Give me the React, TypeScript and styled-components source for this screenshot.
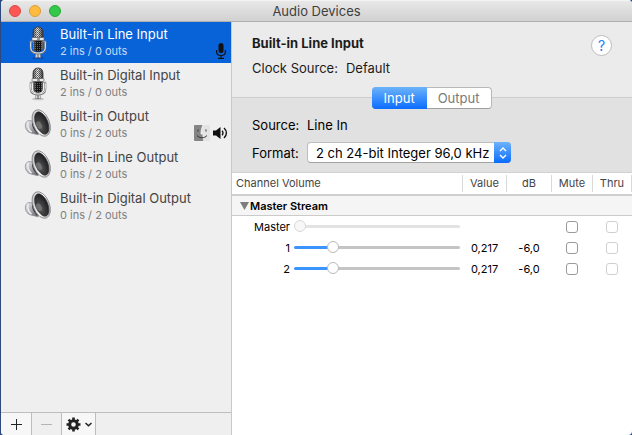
import React, { useState } from "react";
import styled, { createGlobalStyle, css } from "styled-components";

const GlobalStyle = createGlobalStyle`
  *, *::before, *::after { box-sizing: border-box; }
  body {
    margin: 0;
    background: #2c4a80;
    font-family: Inter, "Liberation Sans", sans-serif;
    font-size: 13px;
    line-height: 16px;
    color: #1c1c1c;
  }
  button, input, select { font: inherit; color: inherit; margin: 0; }
`;

const Window = styled.div`
  display: flex;
  flex-direction: column;
  min-height: 100vh;
  margin-left: 1px;
  background: #fff;
  border-radius: 4px;
  overflow: hidden;
`;

const TitleBar = styled.header`
  display: grid;
  grid-template-columns: 64px 1fr 64px;
  align-items: center;
  height: 22px;
  background: linear-gradient(#e8e8e8, #d1d1d1);
  border-top: 1px solid #f4f4f4;
  border-bottom: 1px solid #b0b0b0;
`;

const Lights = styled.div`
  display: flex;
  gap: 8px;
  padding-left: 8px;
`;

const Light = styled.button<{ $fill: string; $edge: string }>`
  width: 12px;
  height: 12px;
  padding: 0;
  border-radius: 50%;
  border: 1px solid ${(p) => p.$edge};
  background: ${(p) => p.$fill};
`;

const Title = styled.h1`
  margin: 0;
  font-size: 13px;
  font-weight: 400;
  text-align: center;
  color: #404040;
`;

const Body = styled.div`
  display: flex;
  flex: 1;
`;

const Sidebar = styled.aside`
  display: flex;
  flex-direction: column;
  flex: 0 0 231px;
  background: #efefef;
  border-right: 1px solid #c9c9c9;
`;

const DeviceList = styled.ul`
  flex: 1;
  margin: 0;
  padding: 0;
  list-style: none;
`;

const DeviceRow = styled.button<{ $selected: boolean }>`
  display: flex;
  align-items: center;
  width: 100%;
  height: 41px;
  padding: 0 3px 0 23px;
  border: 0;
  text-align: left;
  background: ${(p) => (p.$selected ? "#0863d9" : "transparent")};
  color: ${(p) => (p.$selected ? "#fff" : "#444")};
`;

const IconSlot = styled.span`
  display: flex;
  justify-content: center;
  align-self: flex-start;
  width: 28px;
  margin-right: 8px;
  padding-top: 4px;
`;

const DeviceText = styled.span`
  display: flex;
  flex-direction: column;
  gap: 1px;
  flex: 1;
  white-space: nowrap;
`;

const DeviceIo = styled.span<{ $selected: boolean }>`
  font-size: 11px;
  color: ${(p) => (p.$selected ? "#c6dbf6" : "#808080")};
`;

const Badges = styled.span`
  display: flex;
  align-items: center;
  align-self: flex-end;
  gap: 3px;
  margin-bottom: 4px;
`;

const Footer = styled.div`
  display: flex;
  height: 23px;
  border-top: 1px solid #bdbdbd;
`;

const FooterButton = styled.button<{ $wide?: boolean }>`
  display: flex;
  align-items: center;
  justify-content: center;
  gap: 4px;
  width: ${(p) => (p.$wide ? 34 : 30)}px;
  padding: 0;
  border: 0;
  border-right: 1px solid #bdbdbd;
  background: #f7f7f7;
  &:first-child { width: 31px; }
  &:disabled { background: #efefef; }
`;

const Detail = styled.main`
  flex: 1;
  min-width: 0;
`;

const Summary = styled.section`
  display: flex;
  justify-content: space-between;
  align-items: flex-start;
  height: 75px;
  padding: 13px 20px 0;
  background: #ebebeb;
`;

const DeviceName = styled.h2`
  margin: 0 0 9px;
  font-size: 13px;
  line-height: 16px;
  font-weight: 700;
`;

const Facts = styled.div`
  display: flex;
  gap: 8px;
`;

const HelpButton = styled.button`
  width: 21px;
  height: 21px;
  padding: 0;
  border: 1px solid #bcbcbc;
  border-radius: 50%;
  background: #fff;
  color: #1a7dff;
  font-size: 14px;
  line-height: 18px;
`;

const Settings = styled.section`
  height: 76px;
  padding: 0 20px;
  background: #e1e1e1;
  border-top: 1px solid #cdcdcd;
  border-bottom: 1px solid #d2d2d2;
`;

const Tabs = styled.div`
  display: flex;
  width: max-content;
  margin: -11px auto 8px;
  border: 1px solid #b8b8b8;
  border-bottom-color: #9f9f9f;
  border-radius: 4px;
  background: #fff;
`;

const Tab = styled.button<{ $active: boolean }>`
  height: 20px;
  padding: 0 12px 0 11px;
  border: 0;
  background: transparent;
  color: #7a7a7a;
  ${(p) =>
    p.$active &&
    css`
      margin: -1px 0 -1px -1px;
      height: 22px;
      padding: 0 12px;
      border-radius: 4px 0 0 4px;
      background: linear-gradient(#6cb3fa, #0a6cff);
      color: #fff;
    `}
`;

const FormGrid = styled.div`
  display: grid;
  grid-template-columns: 48px 204px;
  column-gap: 7px;
  row-gap: 9px;
  align-items: center;
  color: #000;
`;

const SelectBox = styled.span`
  position: relative;
  display: block;
`;

const Select = styled.select`
  appearance: none;
  display: block;
  width: 100%;
  height: 21px;
  padding: 0 18px 0 8px;
  border: 1px solid #bdbdbd;
  border-bottom-color: #a3a3a3;
  border-radius: 4px;
  background: #fff;
`;

const SelectArrows = styled.span`
  position: absolute;
  top: 0;
  right: 0;
  display: flex;
  width: 17px;
  height: 21px;
  align-items: center;
  justify-content: center;
  border-radius: 0 4px 4px 0;
  background: linear-gradient(#6cb3fa, #0a6cff);
  pointer-events: none;
`;

const Table = styled.table`
  width: 100%;
  table-layout: fixed;
  border-collapse: separate;
  border-spacing: 0;
  font-size: 11px;
  line-height: 14px;
  color: #000;
  td { padding: 0 1px 0 0; height: 21px; text-align: center; }
`;

const Col = styled.col<{ $width?: number }>`
  ${(p) => p.$width && `width: ${p.$width}px;`}
`;

const HeadCell = styled.th<{ $start?: boolean }>`
  height: 23px;
  padding: 2px 0;
  border-bottom: 2px solid #cfcfcf;
  font-weight: 400;
  color: #444;
  text-align: ${(p) => (p.$start ? "left" : "center")};
  span {
    display: block;
    padding-left: ${(p) => (p.$start ? 4 : 0)}px;
    line-height: 17px;
    border-right: 1px solid #d9d9d9;
  }
`;

const GroupCell = styled.th`
  height: 20px;
  padding: 0 8px;
  background: #f5f5f5;
  border-bottom: 1px solid #cbcbcb;
  text-align: left;
`;

const GroupToggle = styled.button`
  display: flex;
  align-items: center;
  gap: 1px;
  padding: 0;
  border: 0;
  background: none;
  font-weight: 600;
  color: #000;
`;

const SliderLabel = styled.label`
  display: grid;
  grid-template-columns: 58px 1fr;
  column-gap: 4px;
  align-items: center;
  padding-right: 2px;
  text-align: right;
`;

const Slider = styled.input`
  appearance: none;
  width: 100%;
  min-width: 0;
  height: 12px;
  background: transparent;
  &::-webkit-slider-runnable-track {
    height: 3px;
    border-radius: 2px;
    background: linear-gradient(to right, #3c94ff var(--level), #c4c4c4 var(--level));
  }
  &::-webkit-slider-thumb {
    appearance: none;
    width: 12px;
    height: 12px;
    margin-top: -5px;
    border: 1px solid #b8b8b8;
    border-radius: 50%;
    background: #fff;
  }
  &:disabled::-webkit-slider-runnable-track { background: #e3e3e3; }
  &:disabled::-webkit-slider-thumb { border-color: #d9d9d9; background: #f7f7f7; }
`;

const Check = styled.input`
  appearance: none;
  display: block;
  width: 12px;
  height: 12px;
  margin: 0 auto;
  border: 1px solid #9a9a9a;
  border-radius: 3px;
  background: #fff;
  &:checked { background: #2f87ff; border-color: #1a6ee0; }
  &:disabled { border-color: #d0d0d0; }
`;

const MicIcon = () => (
  <svg width="18" height="34" viewBox="0 0 18 34" aria-hidden="true">
    <defs>
      <linearGradient id="micTop" x2="1">
        <stop offset="0" stopColor="#666" />
        <stop offset=".45" stopColor="#eee" />
        <stop offset="1" stopColor="#444" />
      </linearGradient>
      <linearGradient id="micLow" x2="1">
        <stop offset="0" stopColor="#777" />
        <stop offset=".3" stopColor="#171717" />
        <stop offset=".75" stopColor="#111" />
        <stop offset="1" stopColor="#777" />
      </linearGradient>
      <pattern id="mesh" width="2" height="2" patternUnits="userSpaceOnUse">
        <rect width="1" height="1" fill="#222" fillOpacity=".75" />
        <rect x="1" y="1" width="1" height="1" fill="#222" fillOpacity=".55" />
      </pattern>
      <pattern id="meshLow" width="2" height="2" patternUnits="userSpaceOnUse">
        <rect width="1" height="1" fill="#999" fillOpacity=".6" />
      </pattern>
    </defs>
    <ellipse cx="9" cy="32" rx="6" ry="1.3" fill="#000" fillOpacity=".18" />
    <path d="M7 27h4l.7 4.5H6.300z" fill="#ddd" stroke="#777" strokeWidth=".6" />
    <path d="M9 26v6" stroke="#555" strokeWidth="1" />
    <path d="M1.700 16v5.500c0 4 2.800 6 7.300 6s7.300-2 7.300-6V16" fill="none" stroke="#777" strokeWidth="2" />
    <path d="M1.700 16v5.300c0 4 2.800 5.700 7.300 5.700s7.300-1.700 7.300-5.700V16" fill="none" stroke="#eee" strokeWidth="1" />
    <path d="M4 14h10v7.500c0 3-2 4.200-5 4.200s-5-1.200-5-4.200z" fill="url(#micLow)" />
    <path d="M4 15h10v7c0 2-2 3-5 3s-5-1-5-3z" fill="url(#meshLow)" />
    <path d="M4 12V6.500C4 3 5.900 1 9 1s5 2 5 5.500V12z" fill="url(#micTop)" stroke="#333" strokeWidth=".8" />
    <path d="M4 12V6.500C4 3 5.900 1 9 1s5 2 5 5.500V12z" fill="url(#mesh)" />
    <rect x="3" y="11.500" width="12" height="3" rx=".7" fill="#e9e9e9" stroke="#555" strokeWidth=".6" />
    <path d="M8 12.500h3v1H8z" fill="#444" />
    <path d="M.8 15.500h3M14.200 15.500h3" stroke="#999" strokeWidth="1.500" />
  </svg>
);

const SpeakerIcon = () => (
  <svg width="28" height="30" viewBox="1 1 26 28" aria-hidden="true">
    <defs>
      <linearGradient id="spkBody" x2="1" y2="1">
        <stop offset="0" stopColor="#fff" />
        <stop offset=".5" stopColor="#b5b5bb" />
        <stop offset="1" stopColor="#55555c" />
      </linearGradient>
      <linearGradient id="spkRim" x2="1" y2="1">
        <stop offset="0" stopColor="#aaa" />
        <stop offset=".5" stopColor="#fff" />
        <stop offset="1" stopColor="#999" />
      </linearGradient>
      <radialGradient id="spkCone" cx=".3" cy=".6" r=".7">
        <stop offset="0" stopColor="#777" />
        <stop offset=".3" stopColor="#444" />
        <stop offset="1" stopColor="#1d1d20" />
      </radialGradient>
    </defs>
    <path d="M8 13C5 12 2.500 13.500 2.200 17c-.2 4 2.500 7 6 7.500l6 1.500V8z" fill="url(#spkBody)" stroke="#8b8b91" strokeWidth=".7" />
    <path d="M5 14c-1.500 3 0 7.500 3 9.500" stroke="#eee" strokeWidth="1.500" fill="none" />
    <path d="M9 13c-1.500 3 0 8 4 11.500l3-1-4-13z" fill="#35353a" />
    <ellipse cx="17" cy="15" rx="7.600" ry="13" transform="rotate(-22 17 15)" fill="url(#spkRim)" stroke="#88888e" strokeWidth=".8" />
    <ellipse cx="17.500" cy="15" rx="5.700" ry="11" transform="rotate(-22 17.500 15)" fill="url(#spkCone)" stroke="#333" strokeWidth=".6" />
    <ellipse cx="14.800" cy="17" rx="2.400" ry="3.600" transform="rotate(-22 14.800 17)" fill="#777" fillOpacity=".8" />
  </svg>
);

const SmallMic = () => (
  <svg width="14" height="17" viewBox="-2 -1 14 17" aria-hidden="true">
    <rect x="2.500" y="0" width="5" height="10" rx="2.500" fill="#111" />
    <path d="M.6 7v1.500c0 2.800 1.700 4 4.400 4s4.400-1.200 4.400-4V7M5 12.500v3M2 15.300h6" fill="none" stroke="#111" strokeWidth="1.200" />
  </svg>
);

const FinderIcon = () => (
  <svg width="16" height="16" viewBox="0 0 16 16" aria-hidden="true">
    <rect width="16" height="16" rx="1" fill="#e4e4e4" />
    <path d="M0 1q0-1 1-1h8C7.500 3 7 6 7 9h2c0 3 .2 5 .8 7H1q-1 0-1-1z" fill="#858585" />
    <path d="M9 0C7.500 3 7 6 7 9h2c0 3 .2 5 .8 7" fill="none" stroke="#fafafa" strokeWidth=".8" />
    <path d="M4 4.500v2M12 4.500v2M3 10.500c2.500 3 7.500 3 10 0" fill="none" stroke="#333" strokeWidth="1" />
  </svg>
);

const SmallSpeaker = () => (
  <svg width="15" height="14" viewBox="0 0 15 14" aria-hidden="true">
    <path d="M0 4.500h3L7.500 1v12L3 9.500H0z" fill="#111" />
    <path d="M9 4.800c1.300 1.200 1.300 3.200 0 4.400M11 2c3.200 2.800 3.200 7.200 0 10" fill="none" stroke="#111" strokeWidth="1.400" />
  </svg>
);

const GearIcon = () => (
  <svg width="15" height="15" viewBox="0 0 15 15" aria-hidden="true">
    <circle cx="7.500" cy="7.500" r="3.800" fill="none" stroke="#222" strokeWidth="3" />
    <path
      d="M7.500 .5v3M7.500 11.500v3M.5 7.500h3M11.500 7.500h3M2.550 2.550l2 2M10.450 10.450l2 2M2.550 12.450l2-2M10.450 4.550l2-2"
      stroke="#222"
      strokeWidth="2.600"
    />
  </svg>
);

type Device = { name: string; io: string; kind: "mic" | "speaker"; badges?: React.ReactNode };

const devices: Device[] = [
  { name: "Built-in Line Input", io: "2 ins / 0 outs", kind: "mic", badges: <SmallMic /> },
  { name: "Built-in Digital Input", io: "2 ins / 0 outs", kind: "mic" },
  {
    name: "Built-in Output",
    io: "0 ins / 2 outs",
    kind: "speaker",
    badges: (
      <>
        <FinderIcon />
        <SmallSpeaker />
      </>
    ),
  },
  { name: "Built-in Line Output", io: "0 ins / 2 outs", kind: "speaker" },
  { name: "Built-in Digital Output", io: "0 ins / 2 outs", kind: "speaker" },
];

const channels = [
  { label: "Master", level: 0, value: "", db: "", disabled: true },
  { label: "1", level: 0.217, value: "0,217", db: "-6,0", disabled: false },
  { label: "2", level: 0.217, value: "0,217", db: "-6,0", disabled: false },
];

const Channel = ({ label, level, value, db, disabled }: (typeof channels)[number]) => {
  const [current, setCurrent] = useState(level);
  return (
    <tr>
      <td>
        <SliderLabel>
          {label}
          <Slider
            type="range"
            min={0}
            max={1}
            step={0.001}
            value={current}
            disabled={disabled}
            onChange={(e) => setCurrent(Number(e.target.value))}
            style={{ "--level": `${current * 100}%` } as React.CSSProperties}
          />
        </SliderLabel>
      </td>
      <td>{value}</td>
      <td>{db}</td>
      <td>
        <Check type="checkbox" aria-label={`Mute ${label}`} />
      </td>
      <td>
        <Check type="checkbox" aria-label={`Thru ${label}`} disabled />
      </td>
    </tr>
  );
};

export default function App() {
  const [selected, setSelected] = useState(0);
  const [tab, setTab] = useState("Input");

  return (
    <>
      <GlobalStyle />
      <Window>
        <TitleBar>
          <Lights>
            <Light $fill="#fc5753" $edge="#df4744" aria-label="Close" />
            <Light $fill="#fdbc40" $edge="#de9f34" aria-label="Minimize" />
            <Light $fill="#34c84a" $edge="#27aa35" aria-label="Zoom" />
          </Lights>
          <Title>Audio Devices</Title>
        </TitleBar>
        <Body>
          <Sidebar>
            <DeviceList>
              {devices.map((d, i) => (
                <li key={d.name}>
                  <DeviceRow $selected={i === selected} onClick={() => setSelected(i)}>
                    <IconSlot>{d.kind === "mic" ? <MicIcon /> : <SpeakerIcon />}</IconSlot>
                    <DeviceText>
                      <span>{d.name}</span>
                      <DeviceIo $selected={i === selected}>{d.io}</DeviceIo>
                    </DeviceText>
                    {d.badges && <Badges>{d.badges}</Badges>}
                  </DeviceRow>
                </li>
              ))}
            </DeviceList>
            <Footer>
              <FooterButton aria-label="Add device">
                <svg width="11" height="11" viewBox="0 0 11 11">
                  <path d="M5.500 0v11M0 5.500h11" stroke="#222" />
                </svg>
              </FooterButton>
              <FooterButton aria-label="Remove device" disabled>
                <svg width="11" height="11" viewBox="0 0 11 11">
                  <path d="M0 5.500h11" stroke="#b5b5b5" />
                </svg>
              </FooterButton>
              <FooterButton aria-label="Actions" $wide>
                <GearIcon />
                <svg width="7" height="5" viewBox="0 0 7 5">
                  <path d="M.5 1l3 2.800 3-2.800" fill="none" stroke="#222" strokeWidth="1.500" />
                </svg>
              </FooterButton>
            </Footer>
          </Sidebar>
          <Detail>
            <Summary>
              <div>
                <DeviceName>Built-in Line Input</DeviceName>
                <Facts>
                  <span>Clock Source:</span>
                  <span>Default</span>
                </Facts>
              </div>
              <HelpButton aria-label="Help">?</HelpButton>
            </Summary>
            <Settings>
              <Tabs role="tablist">
                {["Input", "Output"].map((t) => (
                  <Tab key={t} role="tab" aria-selected={t === tab} $active={t === tab} onClick={() => setTab(t)}>
                    {t}
                  </Tab>
                ))}
              </Tabs>
              <FormGrid>
                <span>Source:</span>
                <span>Line In</span>
                <label htmlFor="format">Format:</label>
                <SelectBox>
                  <Select id="format">
                    <option>2 ch 24-bit Integer 96,0 kHz</option>
                  </Select>
                  <SelectArrows>
                    <svg width="8" height="12" viewBox="0 0 8 12">
                      <path d="M1 4l3-3 3 3M1 8l3 3 3-3" fill="none" stroke="#fff" strokeWidth="1.400" />
                    </svg>
                  </SelectArrows>
                </SelectBox>
              </FormGrid>
            </Settings>
            <Table>
              <colgroup>
                <Col />
                <Col $width={44} />
                <Col $width={45} />
                <Col $width={41} />
                <Col $width={39} />
              </colgroup>
              <thead>
                <tr>
                  <HeadCell $start><span>Channel Volume</span></HeadCell>
                  <HeadCell><span>Value</span></HeadCell>
                  <HeadCell><span>dB</span></HeadCell>
                  <HeadCell><span>Mute</span></HeadCell>
                  <HeadCell><span>Thru</span></HeadCell>
                </tr>
              </thead>
              <tbody>
                <tr>
                  <GroupCell colSpan={5}>
                    <GroupToggle>
                      <svg width="9" height="8" viewBox="0 0 9 8" aria-hidden="true">
                        <path d="M0 0h9L4.500 8z" fill="#7d7d7d" />
                      </svg>
                      Master Stream
                    </GroupToggle>
                  </GroupCell>
                </tr>
                {channels.map((c) => (
                  <Channel key={c.label} {...c} />
                ))}
              </tbody>
            </Table>
          </Detail>
        </Body>
      </Window>
    </>
  );
}
